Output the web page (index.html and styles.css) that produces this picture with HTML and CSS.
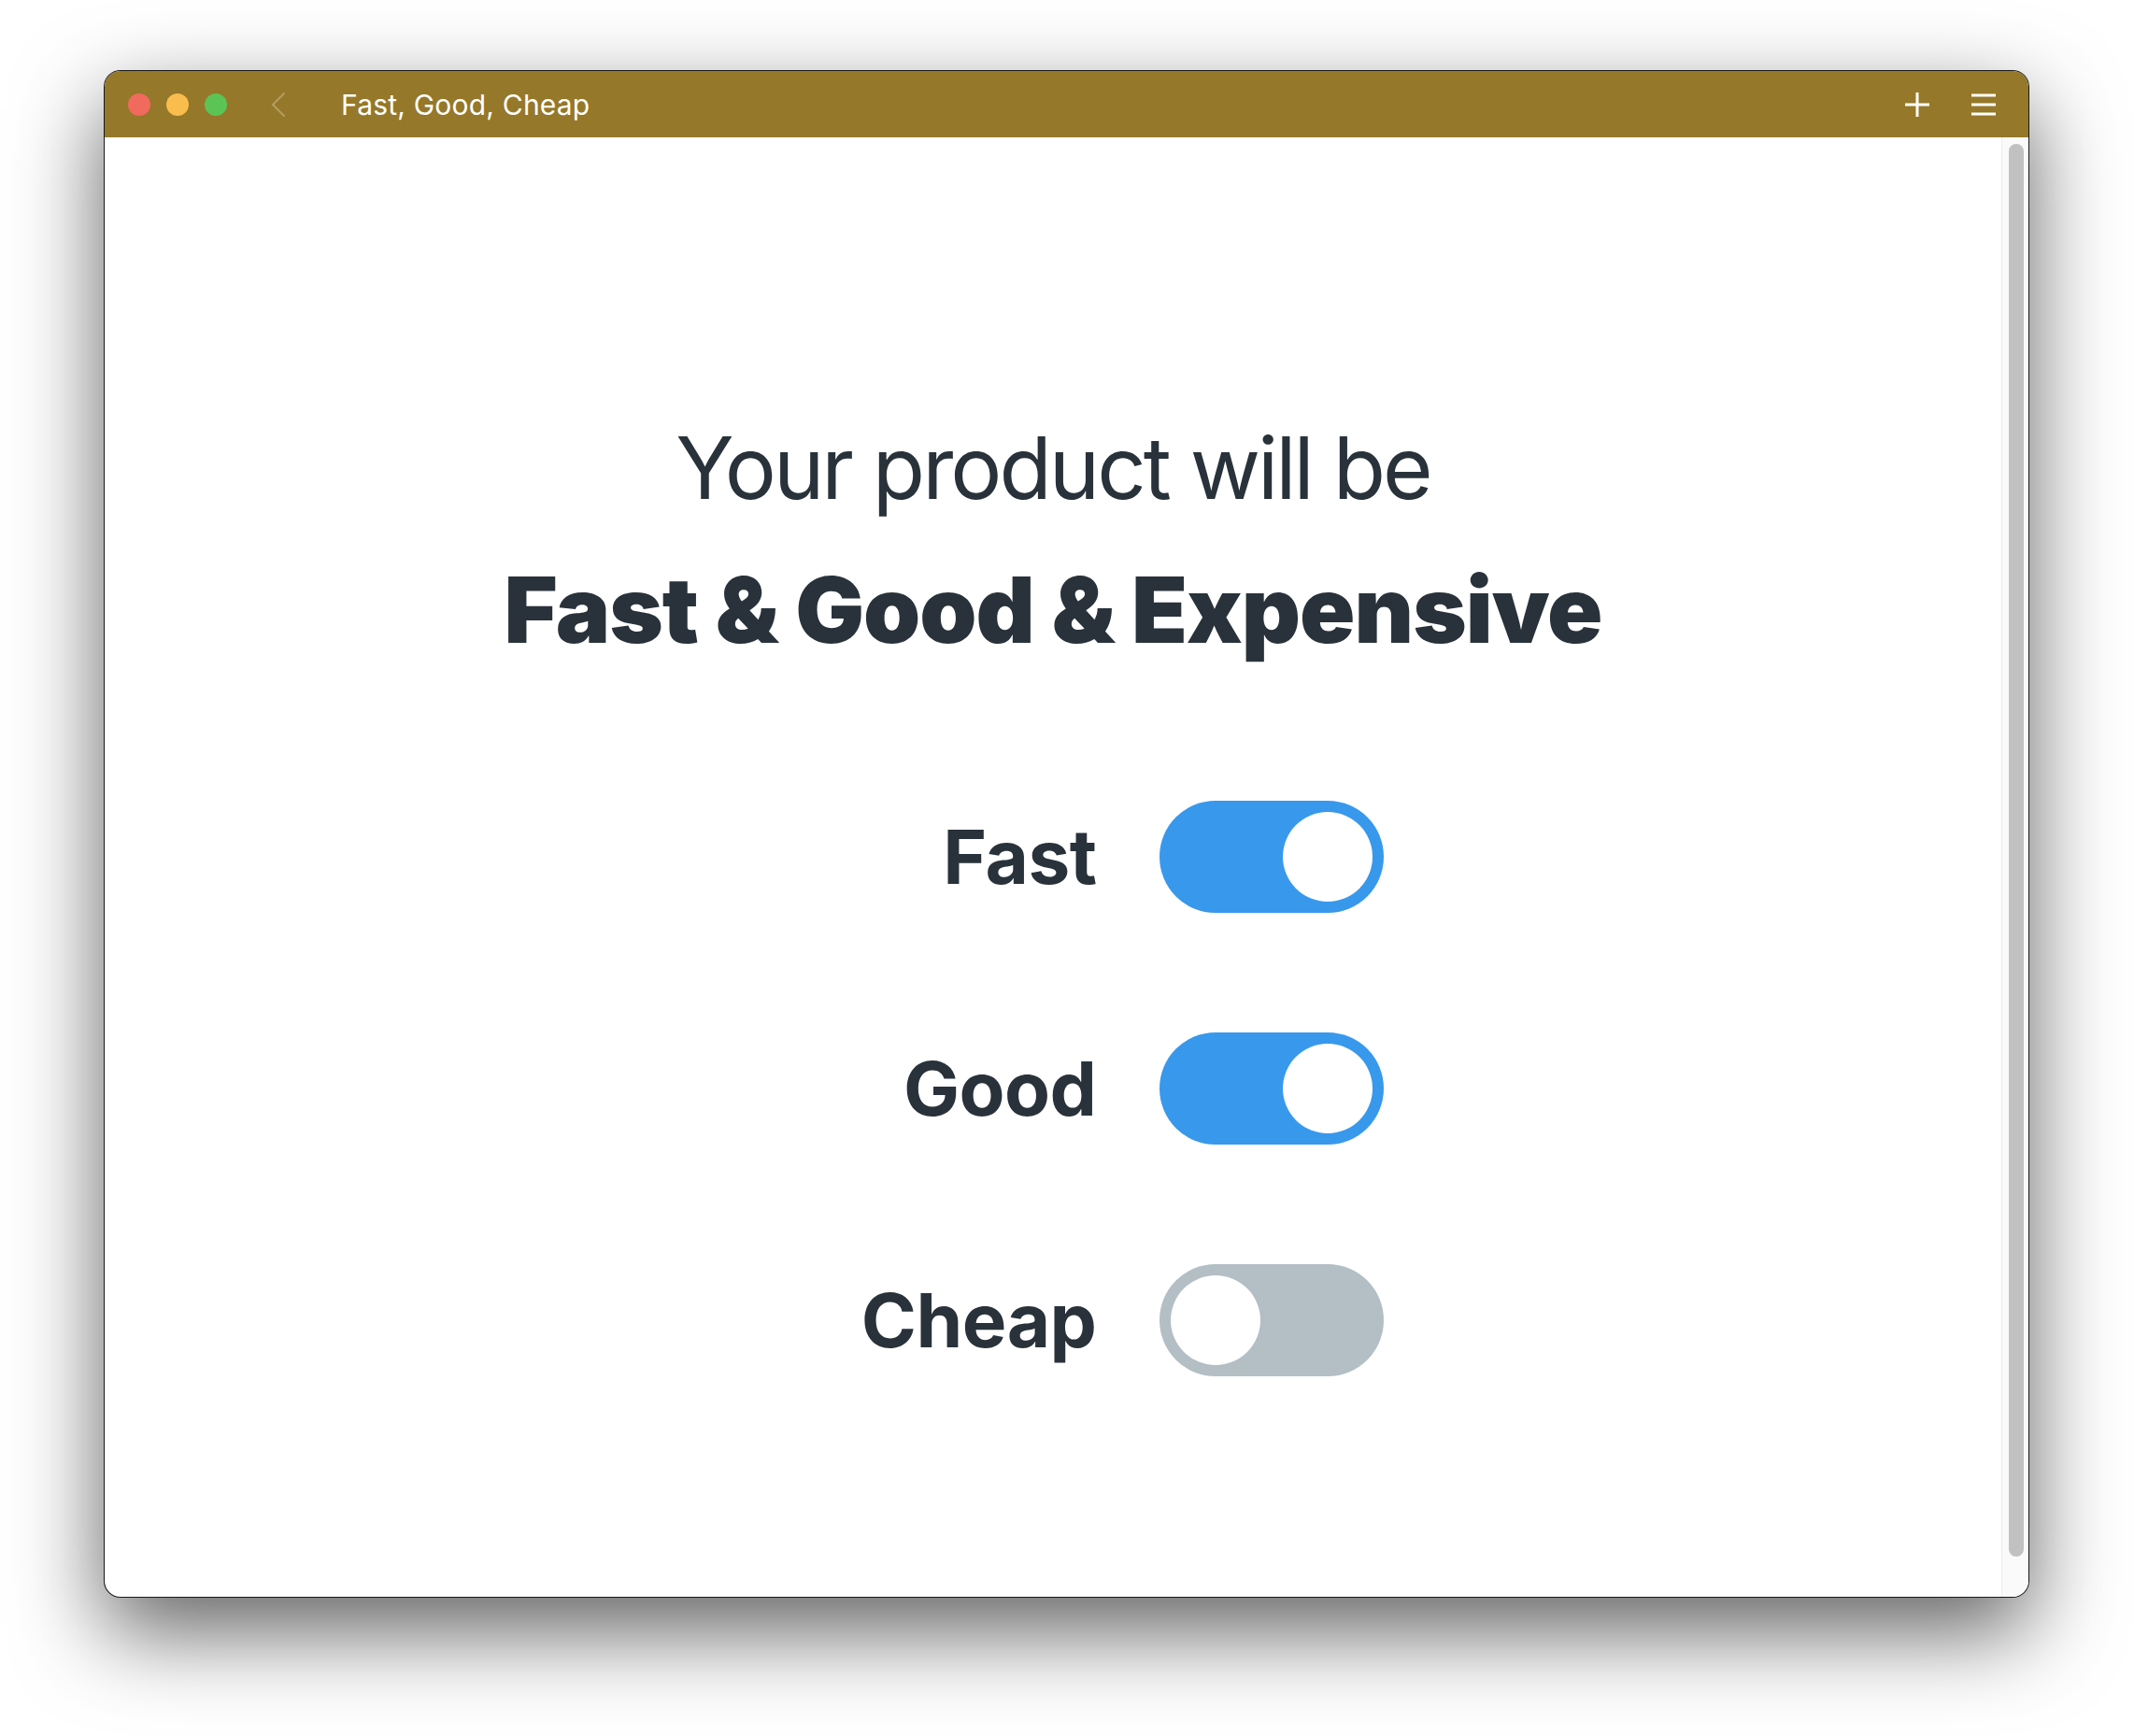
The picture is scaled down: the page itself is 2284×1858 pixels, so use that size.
FILE: index.html
```html
<!DOCTYPE html>
<html lang="en">
<head>
<meta charset="utf-8">
<title>Fast, Good, Cheap</title>
<link rel="stylesheet" href="styles.css">
</head>
<body>
<div class="stage">
  <div class="window">
    <header class="titlebar">
      <div class="lights">
        <span class="light red"></span>
        <span class="light yellow"></span>
        <span class="light green"></span>
      </div>
      <svg class="back" width="16" height="28" viewBox="0 0 16 28"><polyline points="14.5,1.5 2,14 14.5,26.5" fill="none" stroke="rgba(255,255,255,0.28)" stroke-width="2"/></svg>
      <div class="title">Fast, Good, Cheap</div>
      <div class="actions">
        <svg class="icon" width="26" height="26" viewBox="0 0 26 26"><path d="M13 0V26M0 13H26" stroke="#fff" stroke-width="3" fill="none"/></svg>
        <svg class="icon" width="26" height="26" viewBox="0 0 26 26"><path d="M0 3H26M0 13H26M0 23H26" stroke="#fff" stroke-width="3" fill="none"/></svg>
      </div>
    </header>
    <div class="body">
      <main class="content">
        <h1 class="lead">Your product will be</h1>
        <h2 class="result">Fast &amp; Good &amp; Expensive</h2>
        <div class="rows">
          <div class="row">
            <span class="label">Fast</span>
            <span class="switch on"><span class="knob"></span></span>
          </div>
          <div class="row">
            <span class="label">Good</span>
            <span class="switch on"><span class="knob"></span></span>
          </div>
          <div class="row">
            <span class="label">Cheap</span>
            <span class="switch off"><span class="knob"></span></span>
          </div>
        </div>
      </main>
      <div class="scrollbar"><div class="thumb"></div></div>
    </div>
  </div>
</div>
</body>
</html>
```
FILE: styles.css
```css
html, body {
  margin: 0;
  padding: 0;
  background: #ffffff;
}
body {
  font-family: Inter, "Noto Sans", "Liberation Sans", sans-serif;
  width: 2284px;
  height: 1858px;
  overflow: hidden;
}
.stage {
  padding: 75px 0 0 111px;
}
.window {
  box-sizing: border-box;
  width: 2061px;
  height: 1635px;
  border: 1px solid rgba(0, 0, 0, 0.9);
  border-radius: 18px;
  overflow: hidden;
  background: #ffffff;
  display: flex;
  flex-direction: column;
  box-shadow: 0 36px 95px rgba(0, 0, 0, 0.62);
}
.titlebar {
  height: 71px;
  flex: none;
  background: #957829;
  display: flex;
  align-items: center;
  padding: 0 35px 0 25px;
}
.lights {
  display: flex;
  gap: 17px;
}
.light {
  width: 24px;
  height: 24px;
  border-radius: 50%;
  display: block;
}
.red { background: #f06a5e; }
.yellow { background: #f8bd4c; }
.green { background: #5cc455; }
.back {
  margin-left: 47px;
  display: block;
}
.title {
  margin-left: 59px;
  color: #ffffff;
  font-size: 30px;
  font-weight: 400;
  letter-spacing: 0.2px;
  flex: 1;
}
.actions {
  display: flex;
  gap: 45px;
  align-items: center;
}
.icon { display: block; }
.body {
  flex: 1;
  display: flex;
  min-height: 0;
}
.content {
  flex: 1;
  display: flex;
  flex-direction: column;
  align-items: center;
  padding-top: 296px;
  color: #29323a;
}
.lead {
  margin: 0;
  font-size: 92px;
  line-height: 115px;
  font-weight: 400;
  letter-spacing: -3px;
}
.result {
  margin: 37px 0 0;
  font-size: 98px;
  line-height: 115px;
  font-weight: 900;
  letter-spacing: -1px;
}
.rows {
  margin-top: 147px;
  display: flex;
  flex-direction: column;
  gap: 128px;
}
.row {
  display: flex;
  align-items: center;
  gap: 67px;
}
.label {
  width: 400px;
  text-align: right;
  font-size: 80px;
  line-height: 120px;
  font-weight: 700;
  letter-spacing: -0.5px;
}
.switch {
  box-sizing: border-box;
  width: 240px;
  height: 120px;
  border-radius: 60px;
  padding: 12px;
  display: flex;
}
.switch.on {
  background: #3898ec;
  justify-content: flex-end;
}
.switch.off {
  background: #b3bec5;
  justify-content: flex-start;
}
.knob {
  width: 96px;
  height: 96px;
  border-radius: 50%;
  background: #ffffff;
  display: block;
}
.scrollbar {
  width: 29px;
  flex: none;
  box-sizing: border-box;
  border-left: 1px solid #ececec;
  background: #fafafa;
  padding: 7px 0 43px 7px;
  display: flex;
}
.thumb {
  width: 16px;
  flex: none;
  border-radius: 8px;
  background: #c1c1c1;
}
```
